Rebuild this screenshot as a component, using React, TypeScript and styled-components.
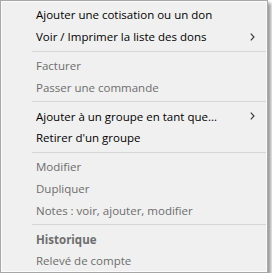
import React from "react";
import { createGlobalStyle, styled } from "styled-components";

const GlobalStyle = createGlobalStyle`
  html, body {
    margin: 0;
    padding: 0;
    background: #ffffff;
  }
  body {
    font-family: "Open Sans", "Noto Sans", sans-serif;
  }
`;

type Item = {
  label: string;
  disabled?: boolean;
  bold?: boolean;
  submenu?: boolean;
};

const groups: Item[][] = [
  [
    { label: "Ajouter une cotisation ou un don" },
    { label: "Voir / Imprimer la liste des dons", submenu: true },
  ],
  [
    { label: "Facturer", disabled: true },
    { label: "Passer une commande", disabled: true },
  ],
  [
    { label: "Ajouter à un groupe en tant que...", submenu: true },
    { label: "Retirer d'un groupe" },
  ],
  [
    { label: "Modifier", disabled: true },
    { label: "Dupliquer", disabled: true },
    { label: "Notes : voir, ajouter, modifier", disabled: true },
  ],
  [
    { label: "Historique", disabled: true, bold: true },
    { label: "Relevé de compte", disabled: true },
  ],
];

const Chevron = () => (
  <svg width="5" height="8" viewBox="0 0 5 8">
    <path d="M0.8 0.6 L4 4 L0.8 7.4" fill="none" stroke="#333" strokeWidth="1.1" />
  </svg>
);

export default function App() {
  return (
    <>
      <GlobalStyle />
      <Menu>
        {groups.map((group, gi) => (
          <React.Fragment key={gi}>
            {gi > 0 && <Separator />}
            {group.map((item) => (
              <Row key={item.label} $disabled={item.disabled}>
                <Label $bold={item.bold}>{item.label}</Label>
                {item.submenu && (
                  <Arrow>
                    <Chevron />
                  </Arrow>
                )}
              </Row>
            ))}
          </React.Fragment>
        ))}
      </Menu>
    </>
  );
}

const Menu = styled.div`
  width: 268px;
  box-sizing: border-box;
  background: #f0f0f0;
  border: 1px solid #a8a8a8;
  box-shadow: inset 0 0 0 1px #fbfbfb, 3px 3px 3px rgba(0, 0, 0, 0.38);
  padding: 3px 0 0 0;
  display: flex;
  flex-direction: column;
`;

const Row = styled.div<{ $disabled?: boolean }>`
  height: 21.8px;
  display: flex;
  align-items: center;
  padding-left: 35px;
  padding-right: 12px;
  font-size: 11.5px;
  color: ${(p) => (p.$disabled ? "#6d6d6d" : "#000000")};
`;

const Label = styled.span<{ $bold?: boolean }>`
  flex: 1;
  font-weight: ${(p) => (p.$bold ? 700 : 400)};
  white-space: nowrap;
`;

const Arrow = styled.span`
  display: flex;
  align-items: center;
`;

const Separator = styled.div`
  height: 1px;
  background: #d7d7d7;
  margin: 3px 1px 3px 31px;
`;
